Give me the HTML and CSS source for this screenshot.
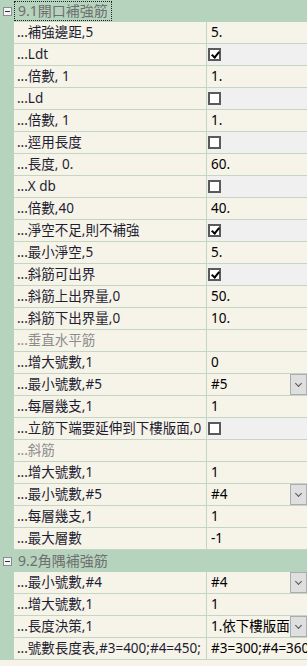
FILE: index.html
```html
<!DOCTYPE html>
<html lang="zh-TW">
<head>
    <meta charset="UTF-8">
    <title>屬性表 - 補強筋</title>
    <link rel="stylesheet" href="styles.css">
</head>
<body>
    <div class="grid">
        <div class="cat">
            <span class="toggle"></span>
            <span class="cat-name focus">9.1開口補強筋</span>
        </div>
        <div class="row"><div class="name">...補強邊距,5</div><div class="val">5.</div></div>
        <div class="row"><div class="name">...Ldt</div><div class="val check"><span class="box on"></span></div></div>
        <div class="row"><div class="name">...倍數, 1</div><div class="val">1.</div></div>
        <div class="row"><div class="name">...Ld</div><div class="val check"><span class="box"></span></div></div>
        <div class="row"><div class="name">...倍數, 1</div><div class="val">1.</div></div>
        <div class="row"><div class="name">...逕用長度</div><div class="val check"><span class="box"></span></div></div>
        <div class="row"><div class="name">...長度, 0.</div><div class="val">60.</div></div>
        <div class="row"><div class="name">...X db</div><div class="val check"><span class="box"></span></div></div>
        <div class="row"><div class="name">...倍數,40</div><div class="val">40.</div></div>
        <div class="row"><div class="name">...淨空不足,則不補強</div><div class="val check"><span class="box on"></span></div></div>
        <div class="row"><div class="name">...最小淨空,5</div><div class="val">5.</div></div>
        <div class="row"><div class="name">...斜筋可出界</div><div class="val check"><span class="box on"></span></div></div>
        <div class="row"><div class="name">...斜筋上出界量,0</div><div class="val">50.</div></div>
        <div class="row"><div class="name">...斜筋下出界量,0</div><div class="val">10.</div></div>
        <div class="row"><div class="name sub">...垂直水平筋</div><div class="val"></div></div>
        <div class="row"><div class="name">...增大號數,1</div><div class="val">0</div></div>
        <div class="row"><div class="name">...最小號數,#5</div><div class="val">#5<span class="drop"></span></div></div>
        <div class="row"><div class="name">...每層幾支,1</div><div class="val">1</div></div>
        <div class="row"><div class="name">...立筋下端要延伸到下樓版面,0</div><div class="val check"><span class="box"></span></div></div>
        <div class="row"><div class="name sub">...斜筋</div><div class="val"></div></div>
        <div class="row"><div class="name">...增大號數,1</div><div class="val">1</div></div>
        <div class="row"><div class="name">...最小號數,#5</div><div class="val">#4<span class="drop"></span></div></div>
        <div class="row"><div class="name">...每層幾支,1</div><div class="val">1</div></div>
        <div class="row"><div class="name">...最大層數</div><div class="val">-1</div></div>

        <div class="cat">
            <span class="toggle"></span>
            <span class="cat-name">9.2角隅補強筋</span>
        </div>
        <div class="row"><div class="name">...最小號數,#4</div><div class="val">#4<span class="drop"></span></div></div>
        <div class="row"><div class="name">...增大號數,1</div><div class="val">1</div></div>
        <div class="row"><div class="name">...長度決策,1</div><div class="val">1.依下樓版面<span class="drop"></span></div></div>
        <div class="row"><div class="name">...號數長度表,#3=400;#4=450;</div><div class="val">#3=300;#4=360</div></div>
    </div>
</body>
</html>
```

FILE: styles.css
```css
* {
    box-sizing: border-box;
}

body {
    margin: 0;
    background: #f6f3e9;
    font-family: "Noto Sans", "Noto Sans CJK TC", sans-serif;
    font-size: 13.5px;
    color: #1e1e32;
}

.grid {
    width: 307px;
}

.cat {
    display: flex;
    align-items: center;
    height: 22px;
    background: #b6d3bd;
}

.toggle {
    position: relative;
    width: 9px;
    height: 9px;
    margin: 0 2px 0 3px;
    border: 1px solid #8c8c8c;
    background: #f4f4f4;
}

.toggle::after {
    content: "";
    position: absolute;
    left: 1px;
    top: 3px;
    width: 5px;
    height: 1px;
    background: #333;
}

.cat-name {
    height: 20px;
    line-height: 18px;
    padding: 0 3px 0 3px;
    color: #6f6f6f;
    font-size: 14px;
    border: 1px solid transparent;
}

.cat-name.focus {
    border: 1px dotted #222;
}

.row {
    display: flex;
    height: 22px;
    border-left: 14px solid #b6d3bd;
}

.name {
    width: 193px;
    padding-left: 3px;
    line-height: 21px;
    white-space: nowrap;
    overflow: hidden;
    border-bottom: 1px solid #c4d5c3;
    border-right: 1px solid #c4d5c3;
}

.name.sub {
    color: #8c8c8c;
}

.val {
    position: relative;
    flex: 1;
    padding-left: 4px;
    line-height: 21px;
    color: #000;
    white-space: nowrap;
    overflow: hidden;
    border-bottom: 1px solid #c4d5c3;
}

.val.check {
    background: #f0f0f0;
    padding-left: 1px;
    display: flex;
    align-items: center;
    padding-bottom: 1px;
}

.box {
    position: relative;
    width: 13px;
    height: 13px;
    border: 2px solid #5a5a5a;
    background: #fff;
}

.box.on::after {
    content: "";
    position: absolute;
    left: 3px;
    top: 0px;
    width: 3px;
    height: 6px;
    border: solid #000;
    border-width: 0 2px 2px 0;
    transform: rotate(40deg);
}

.drop {
    position: absolute;
    right: 0;
    top: 0;
    width: 17px;
    height: 21px;
    background: #dfdfdf;
    border: 1px solid #acacac;
}

.drop::after {
    content: "";
    position: absolute;
    left: 5px;
    top: 6px;
    width: 4px;
    height: 4px;
    border: solid #555;
    border-width: 0 1px 1px 0;
    transform: rotate(45deg);
}
```
